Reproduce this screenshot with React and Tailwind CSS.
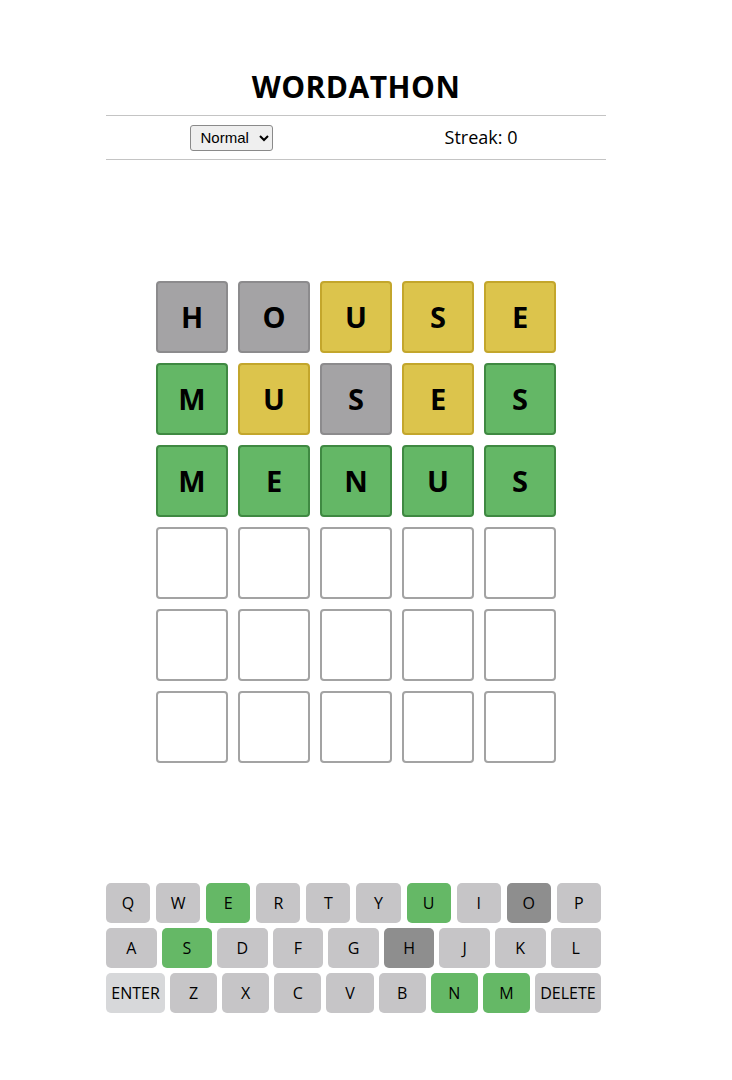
import React from 'react';

const guesses = [
  [['H', 'gray'], ['O', 'gray'], ['U', 'yellow'], ['S', 'yellow'], ['E', 'yellow']],
  [['M', 'green'], ['U', 'yellow'], ['S', 'gray'], ['E', 'yellow'], ['S', 'green']],
  [['M', 'green'], ['E', 'green'], ['N', 'green'], ['U', 'green'], ['S', 'green']],
];

const tileStyles = {
  gray: 'bg-[#a4a3a5] border-[#8c8b8d]',
  yellow: 'bg-[#dcc44c] border-[#c3a62c]',
  green: 'bg-[#64b766] border-[#3f8942]',
  empty: 'bg-white border-[#a3a3a3]',
};

const keyStyles = {
  green: 'bg-[#65b866]',
  dark: 'bg-[#8e8e8e]',
  normal: 'bg-[#c6c5c7]',
};

const keyState = {
  E: 'green', U: 'green', S: 'green', N: 'green', M: 'green',
  O: 'dark', H: 'dark',
};

const rows = ['QWERTYUIOP', 'ASDFGHJKL', 'ZXCVBNM'];

const Tile = ({ letter, state }) => (
  <div
    className={`w-[72px] h-[72px] rounded-[4px] border-2 flex items-center justify-center text-[29px] font-bold text-black ${tileStyles[state]}`}
  >
    {letter}
  </div>
);

const Key = ({ label, className = '' }) => (
  <button
    className={`h-[40px] rounded-[5px] flex items-center justify-center text-[16px] text-black ${className}`}
  >
    {label}
  </button>
);

export default function App() {
  const board = [];
  for (let r = 0; r < 6; r++) {
    board.push(guesses[r] || Array.from({ length: 5 }, () => ['', 'empty']));
  }

  return (
    <div className="w-[732px] h-[1080px] bg-white" style={{ fontFamily: '"Open Sans", "Noto Sans", sans-serif' }}>
      <div className="w-[500px] ml-[106px] pt-[67px]">
        <h1 className="text-center text-[30px] font-bold tracking-[0.5px] leading-[40px] text-black">WORDATHON</h1>
        <div className="mt-[8px] border-t border-b border-[#c4c4c4] h-[45px] flex items-center">
          <div className="w-1/2 flex justify-center">
            <select
              className="h-[26px] px-[6px] border border-[#8a8a8a] rounded-[3px] bg-[#efefef] text-[15px] text-black"
              style={{ fontFamily: '"Liberation Sans", Arial, sans-serif' }}
              defaultValue="Normal"
            >
              <option>Normal</option>
              <option>Hard</option>
            </select>
          </div>
          <div className="w-1/2 flex justify-center text-[18px] text-black">Streak: 0</div>
        </div>

        <div className="mt-[121px] flex flex-col items-center gap-[10px]">
          {board.map((row, i) => (
            <div key={i} className="flex gap-[10px]">
              {row.map(([l, s], j) => (
                <Tile key={j} letter={l} state={s} />
              ))}
            </div>
          ))}
        </div>

        <div className="mt-[120px] w-[495px] flex flex-col gap-[5px]">
          <div className="flex gap-[6px]">
            {rows[0].split('').map((k) => (
              <Key key={k} label={k} className={`flex-1 ${keyStyles[keyState[k] || 'normal']}`} />
            ))}
          </div>
          <div className="flex gap-[5px]">
            {rows[1].split('').map((k) => (
              <Key key={k} label={k} className={`flex-1 ${keyStyles[keyState[k] || 'normal']}`} />
            ))}
          </div>
          <div className="flex gap-[5px]">
            <Key label="ENTER" className="w-[59px] bg-[#d7d8da]" />
            {rows[2].split('').map((k) => (
              <Key key={k} label={k} className={`flex-1 ${keyStyles[keyState[k] || 'normal']}`} />
            ))}
            <Key label="DELETE" className="w-[66px] bg-[#c6c5c7]" />
          </div>
        </div>
      </div>
    </div>
  );
}
